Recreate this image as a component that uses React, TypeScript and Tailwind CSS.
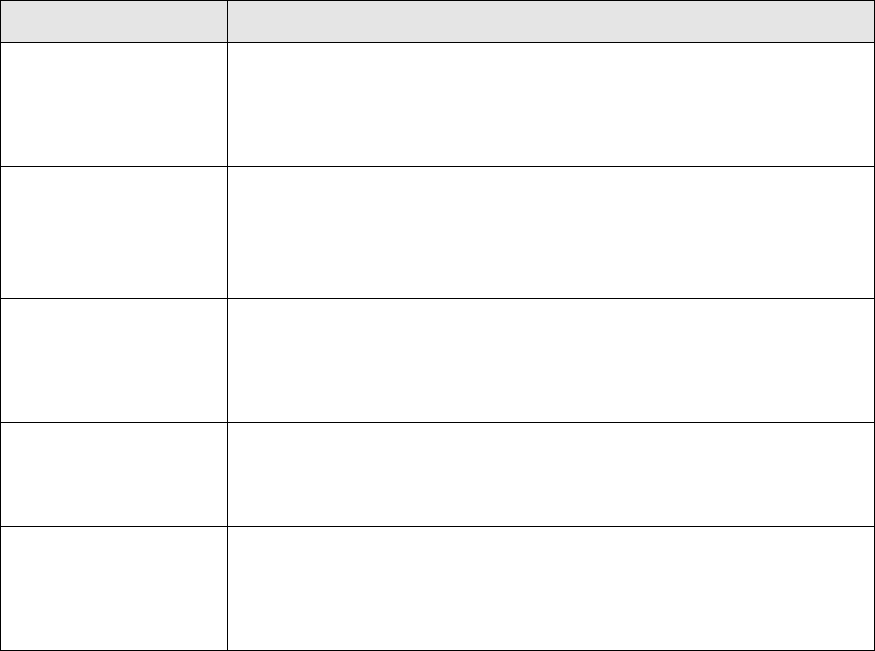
import React from "react";

const rows = [124, 132, 124, 104, 123];

export default function App() {
  return (
    <div className="w-[875px] h-[651px] bg-white" style={{ fontFamily: '"Liberation Sans", Arial, sans-serif' }}>
      <div className="w-[875px] h-[651px] border border-black flex flex-col box-border">
        <div className="flex h-[42px] shrink-0 border-b border-black bg-[#e5e5e5]">
          <div className="w-[227px] shrink-0 border-r border-black"></div>
          <div className="flex-1"></div>
        </div>
        {rows.map((h, i) => (
          <div
            key={i}
            className={i < rows.length - 1 ? "flex shrink-0 border-b border-black" : "flex shrink-0"}
            style={{ height: h }}
          >
            <div className="w-[227px] shrink-0 border-r border-black"></div>
            <div className="flex-1"></div>
          </div>
        ))}
      </div>
    </div>
  );
}
